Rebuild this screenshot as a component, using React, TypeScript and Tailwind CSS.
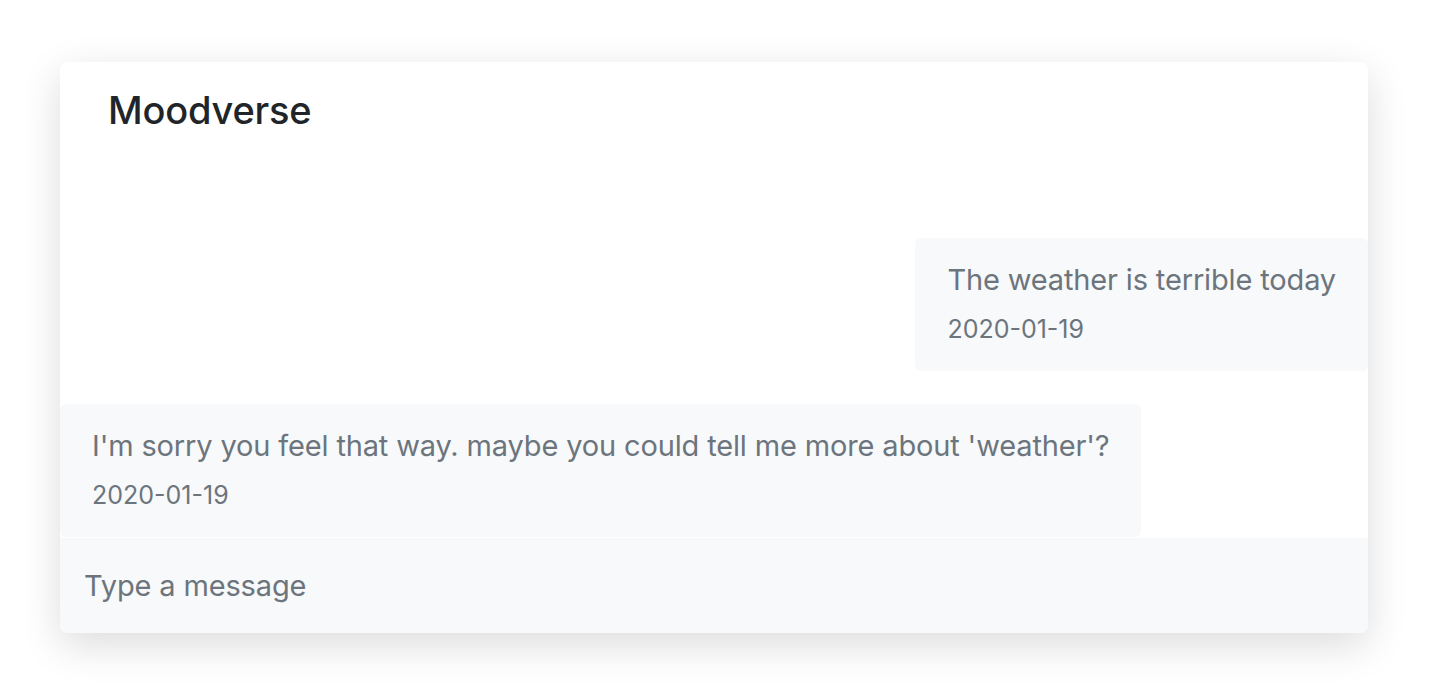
import React, { useState } from 'react';

type Message = {
  id: number;
  text: string;
  date: string;
  mine: boolean;
};

const MESSAGES: Message[] = [
  { id: 1, text: 'The weather is terrible today', date: '2020-01-19', mine: true },
  { id: 2, text: "I'm sorry you feel that way. maybe you could tell me more about 'weather'?", date: '2020-01-19', mine: false },
];

const Bubble: React.FC<{ msg: Message }> = ({ msg }) => (
  <div className={msg.mine ? 'flex justify-end' : 'flex justify-start'}>
    <div className="bg-[#f8f9fa] rounded-md px-8 pt-[22px] pb-[24px] text-[#6c757d]">
      <p className="text-[29px] leading-[40px] tracking-[-0.15px]">{msg.text}</p>
      <p className="text-[25px] leading-[36px] mt-[11px]">{msg.date}</p>
    </div>
  </div>
);

const App: React.FC = () => {
  const [draft, setDraft] = useState('');

  return (
    <div className="min-h-screen bg-white pt-[62px] px-[60px] font-['Inter','Liberation_Sans',sans-serif]">
      <div className="w-[1308px] h-[571px] bg-white rounded-lg shadow-[0_12px_40px_rgba(0,0,0,0.14)] flex flex-col overflow-hidden">
        <header className="h-[96px] flex items-center px-12">
          <h1 className="text-[38px] font-medium text-[#212529] tracking-[-0.2px]">Moodverse</h1>
        </header>

        <main className="flex-1 flex flex-col gap-[33px] pt-[80px]">
          {MESSAGES.map(m => (
            <Bubble key={m.id} msg={m} />
          ))}
        </main>

        <div className="h-[95px] bg-[#f8f9fa] flex items-center px-6">
          <input
            type="text"
            value={draft}
            onChange={e => setDraft(e.target.value)}
            placeholder="Type a message"
            className="w-full bg-transparent outline-none text-[29px] tracking-[-0.15px] text-[#495057] placeholder:text-[#6c757d]"
          />
        </div>
      </div>
    </div>
  );
};

export default App;
